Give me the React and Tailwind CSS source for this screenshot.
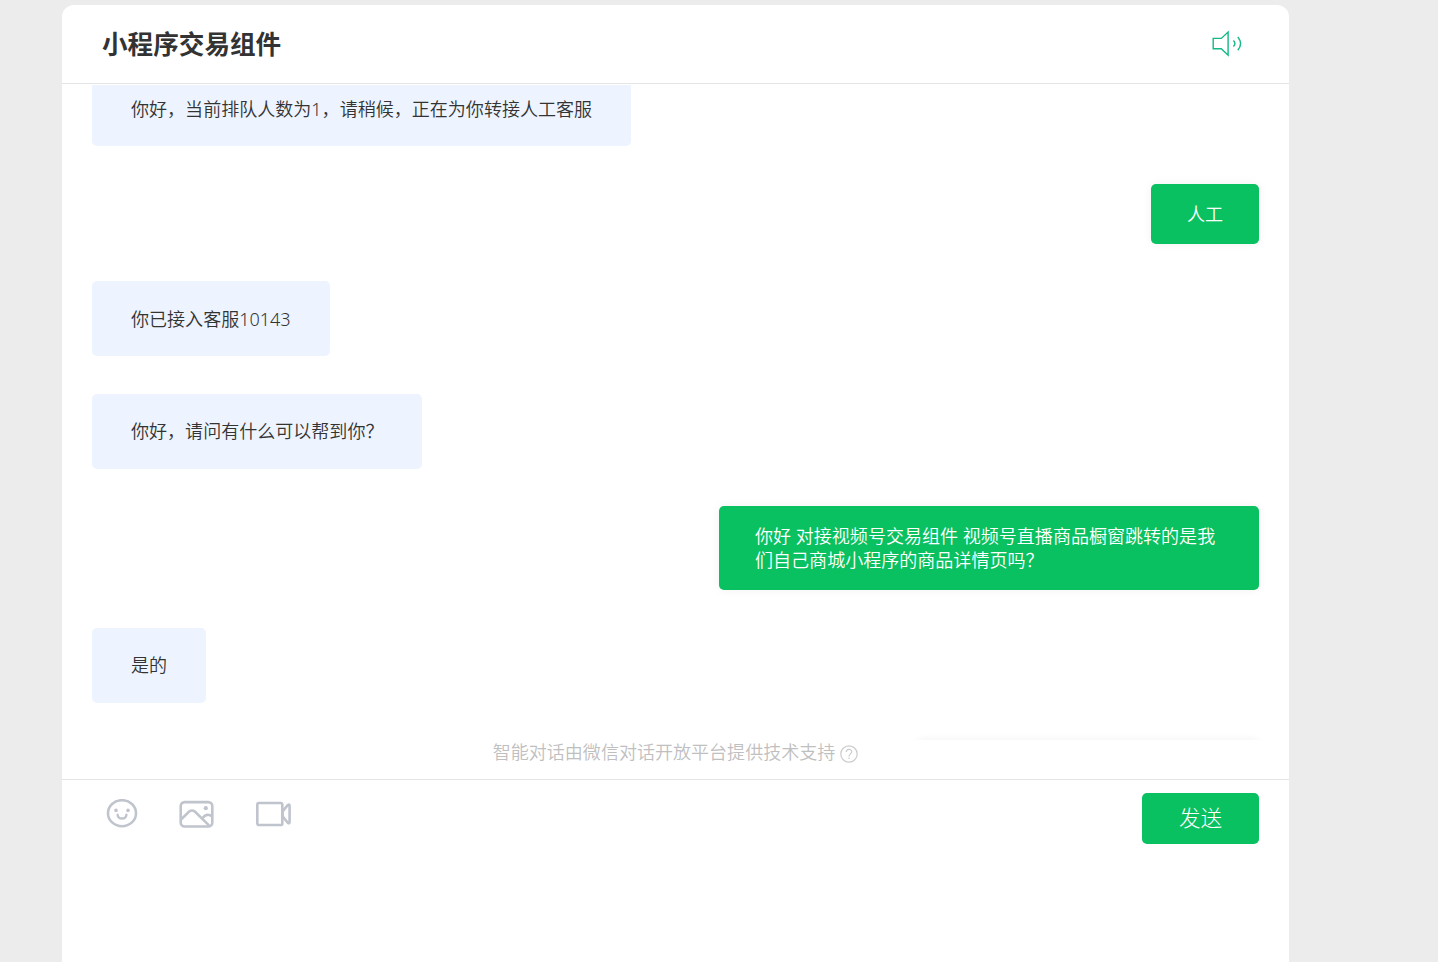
import React from 'react';

const messages = [
  { from: 'agent', text: '你好，当前排队人数为1，请稍候，正在为你转接人工客服' },
  { from: 'me', text: '人工' },
  { from: 'agent', text: '你已接入客服10143' },
  { from: 'agent', text: '你好，请问有什么可以帮到你？' },
  { from: 'me', text: '你好 对接视频号交易组件 视频号直播商品橱窗跳转的是我们自己商城小程序的商品详情页吗？' },
  { from: 'agent', text: '是的' },
];

const SpeakerIcon = () => (
  <svg width="32" height="28" viewBox="0 0 32 28" fill="none" stroke="#12b886" strokeWidth="1.4">
    <path d="M2.2 8.4h8.1l6.8-6.4v23.2l-6.8-6.4H2.2z" />
    <path d="M22.4 10.6q3 3 0 6M26.8 7q5.6 6.6 0 13.2" />
  </svg>
);

const SmileIcon = () => (
  <svg width="32" height="30" viewBox="0 0 32 30" fill="none" stroke="#c0c4cc" strokeWidth="2.6" strokeLinecap="round">
    <ellipse cx="16" cy="14.2" rx="14" ry="13" />
    <path d="M11.6 15.8c.6 5 8.2 5 8.8 0" strokeWidth="2.4" />
    <circle cx="10" cy="11.4" r="1.8" fill="#c0c4cc" stroke="none" />
    <circle cx="22" cy="11.4" r="1.8" fill="#c0c4cc" stroke="none" />
  </svg>
);

const PictureIcon = () => (
  <svg width="36" height="28" viewBox="0 0 36 28" fill="none" stroke="#c0c4cc" strokeWidth="2.6">
    <rect x="1.7" y="2.1" width="31.6" height="24.4" rx="4" />
    <path d="M2 19.5l8.2-7.9q2.8-2.2 5.6 0L30 25.4" />
    <path d="M23.6 18q4.4-5.6 9.6-1.4" />
    <circle cx="26.8" cy="8.2" r="2.1" fill="#c0c4cc" stroke="none" />
  </svg>
);

const VideoIcon = () => (
  <svg width="36" height="26" viewBox="0 0 36 26" fill="none" stroke="#c0c4cc" strokeWidth="2.6" strokeLinejoin="round">
    <rect x="1.3" y="2" width="25" height="22" rx="1.6" />
    <path d="M26.6 10.4l5.4-6.6q1.6-.8 1.6 1v16.2q0 1.8-1.6 1l-5.4-6.6z" />
  </svg>
);

const HelpIcon = () => (
  <svg width="18" height="18" viewBox="0 0 18 18" fill="none" stroke="#cccccc" strokeWidth="1.2">
    <circle cx="9" cy="9" r="8.2" />
    <path d="M6.3 7.1c0-3.7 5.4-3.7 5.4-.3 0 2-2.7 2.2-2.7 4.6M9 12.6v1.4" />
  </svg>
);

const Message = ({ from, text }) => {
  if (from === 'me') {
    return (
      <div className="max-w-[540px] shrink-0 self-end rounded-[5px] bg-[#09c160] px-9 py-[18px] text-white shadow-[0_0_10px_rgba(0,0,0,0.06)]">
        {text}
      </div>
    );
  }
  return (
    <div className="shrink-0 self-start rounded-[5px] bg-[#edf4ff] px-[39px] py-[25.5px] text-[#333333]">
      {text}
    </div>
  );
};

export default function App() {
  return (
    <div className="h-[962px] overflow-hidden bg-[#ececec] pt-[5px] pl-[62px] font-['Noto_Sans','Noto_Sans_CJK_SC',sans-serif]">
      <div className="flex h-[957px] w-[1227px] flex-col rounded-t-[12px] bg-white">
        <header className="flex h-[79px] shrink-0 items-center justify-between border-b border-[#e4e5e7] pr-[46px] pl-10">
          <h1 className="pt-0.5 text-[25.6px] leading-9 font-bold text-[#333333]">小程序交易组件</h1>
          <SpeakerIcon />
        </header>

        <main className="mt-px h-[655px] shrink-0 overflow-hidden px-[30px]">
          <div className="-mt-[14px] flex flex-col gap-[37.5px] text-[18.04px] leading-6 font-[350]">
            {messages.map((message, index) => (
              <Message key={index} {...message} />
            ))}
            {/* next reply, still below the fold */}
            <div className="h-[60px] w-[342px] shrink-0 self-end rounded-[5px] bg-[#09c160] shadow-[0_0_10px_rgba(0,0,0,0.06)]"></div>
          </div>
        </main>

        <div className="flex h-[39px] shrink-0 items-start justify-center gap-[5px] text-[18.05px] leading-6 font-[350] text-[#bfbfbf]">
          <span>智能对话由微信对话开放平台提供技术支持</span>
          <span className="mt-[5px]">
            <HelpIcon />
          </span>
        </div>

        <footer className="flex grow items-start justify-between border-t border-[#e4e5e7] pt-[13px] pr-[30px] pl-11">
          <div className="flex h-[42px] items-center gap-[41px]">
            <SmileIcon />
            <PictureIcon />
            <VideoIcon />
          </div>
          <button className="h-[51px] w-[117px] rounded-[5px] bg-[#09c160] text-[21.6px] font-light text-white">
            发送
          </button>
        </footer>
      </div>
    </div>
  );
}
